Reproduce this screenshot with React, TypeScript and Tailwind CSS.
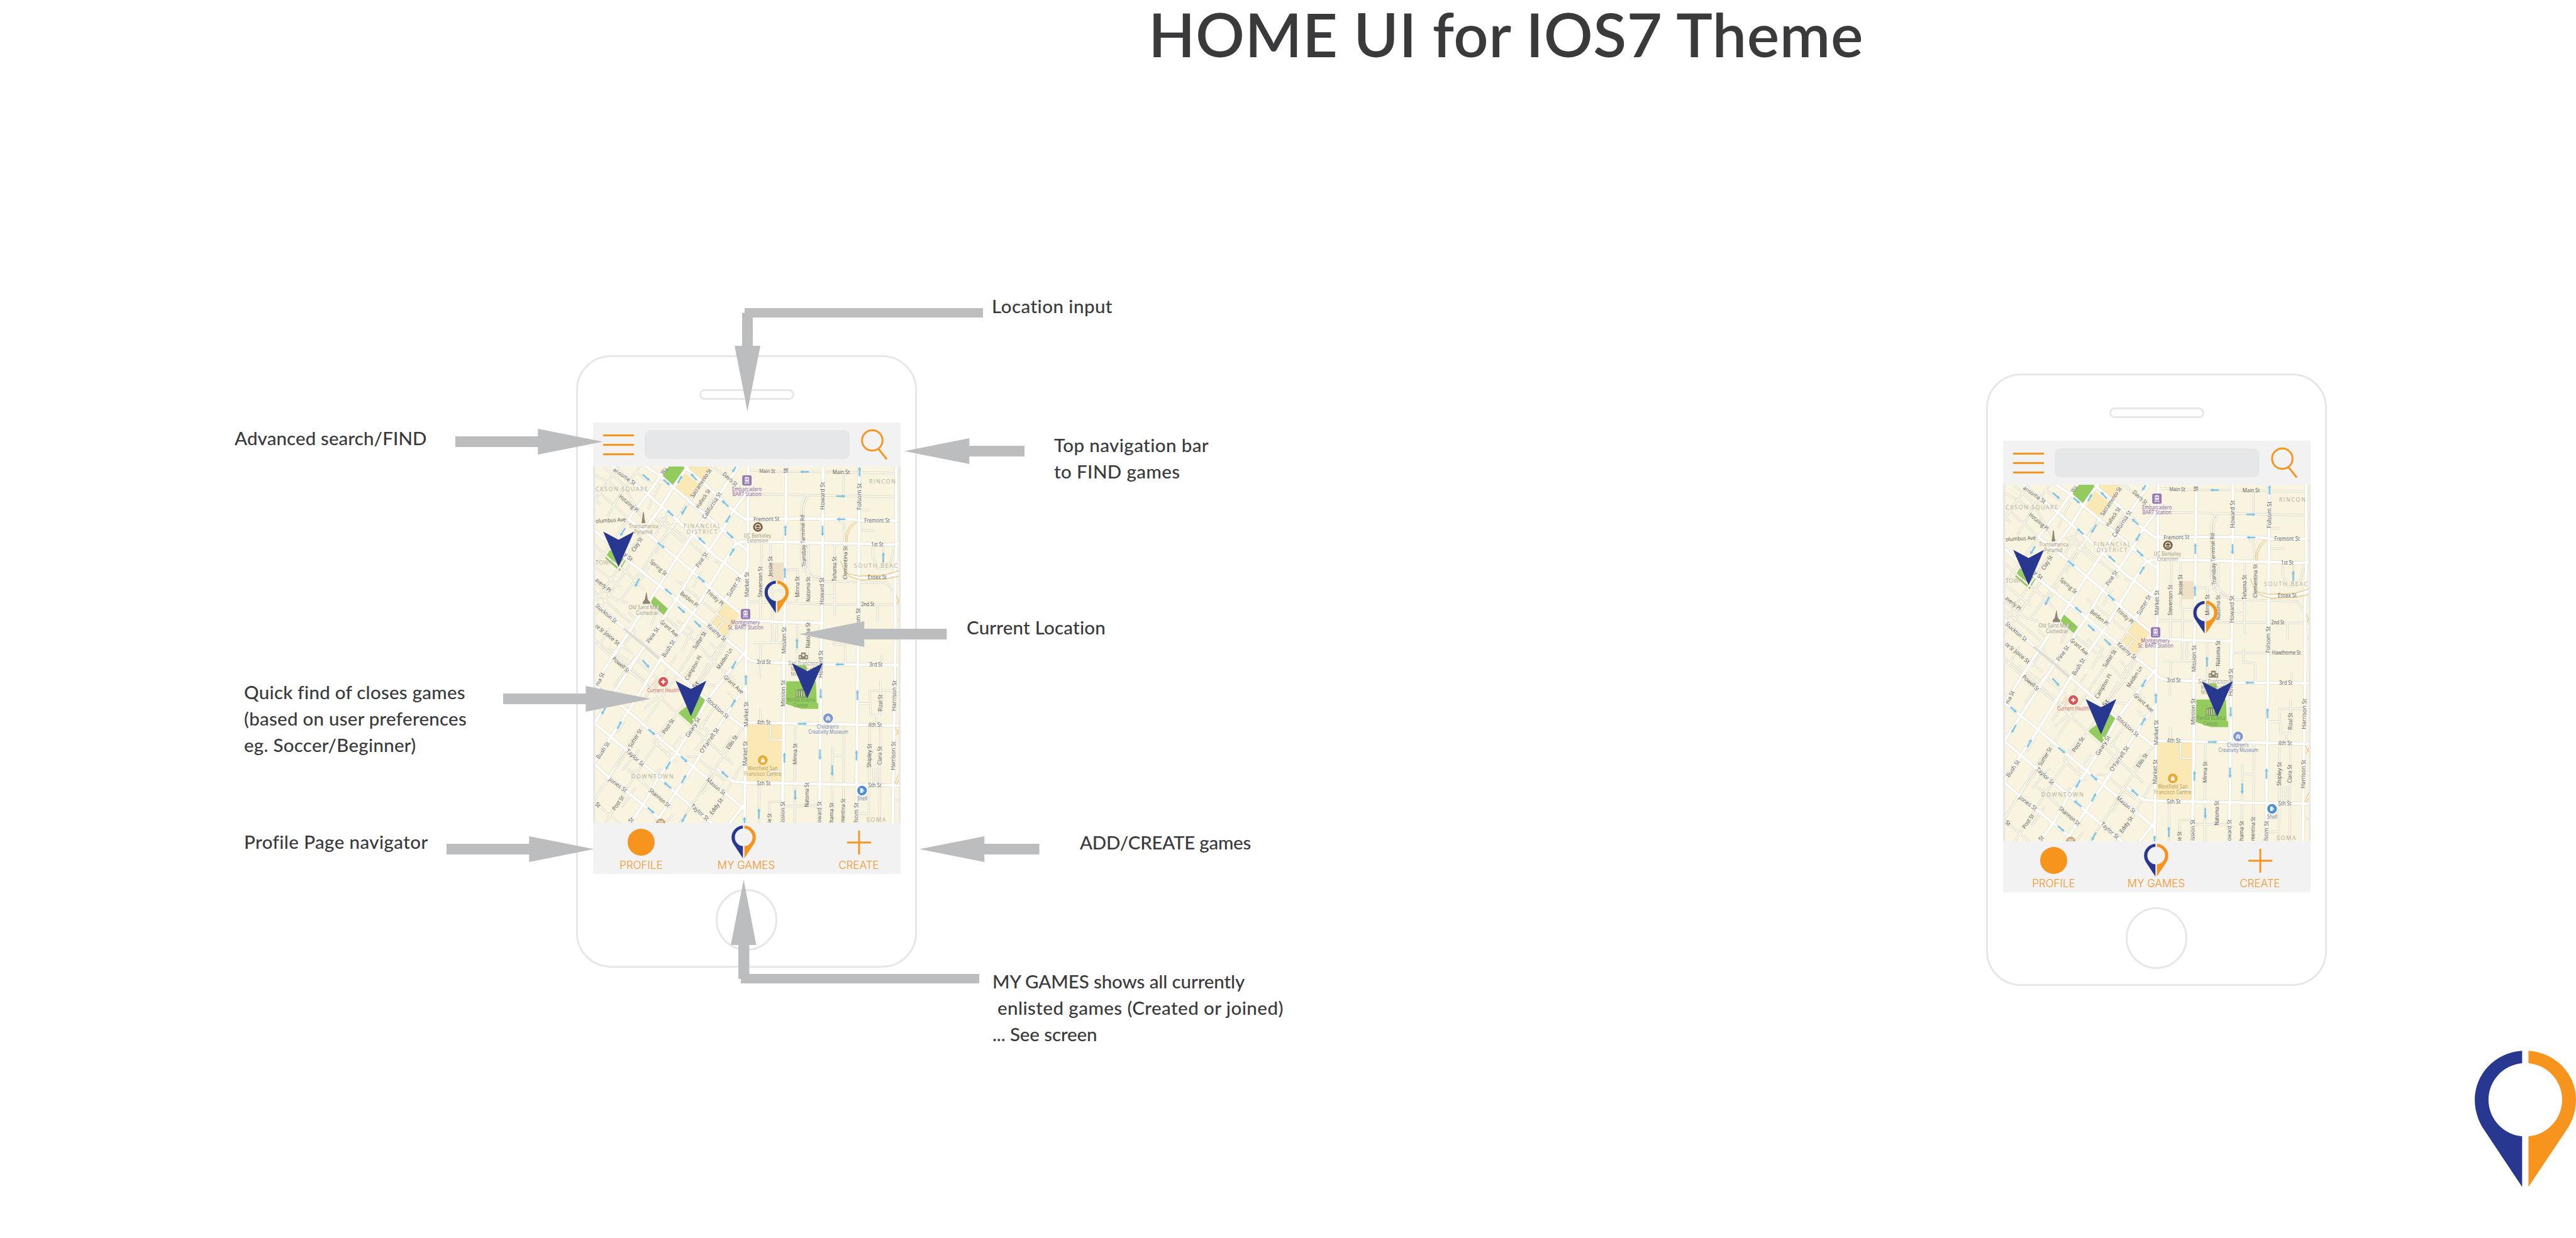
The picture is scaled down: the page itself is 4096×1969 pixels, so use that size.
import React from 'react';

type Pt = [number, number];
type Seg = [number, number, number, number];

const NAVY = '#28378f';
const ORANGE = '#f7941e';
const GREY = '#bbbdbf';

/* Map survey units: 1.96 per px across, 3 per px down. */
const X = (u: number) => u / 1.96;
const Y = (v: number) => v / 3;
const line = (pts: number[]) => {
  let d = '';
  for (let i = 0; i < pts.length; i += 2) {
    d += (i === 0 ? 'M' : 'L') + X(pts[i]).toFixed(1) + ' ' + Y(pts[i + 1]).toFixed(1);
  }
  return d;
};

const MAJOR: number[][] = [
  [790, 800, 787, 1480, 781, 2080, 779, 2600, 774, 3190],
  [955, 800, 951, 1440, 947, 1840, 944, 2110, 943, 2640, 940, 2900, 937, 3190],
  [1114, 800, 1110, 1700, 1105, 2130, 1101, 2900, 1096, 3190],
  [1271, 800, 1268, 1700, 1263, 2300, 1258, 3190],
  [1431, 800, 1432, 1300, 1426, 1600, 1427, 2000, 1422, 2500, 1416, 3190],
  [720, 1100, 775, 1165, 950, 1163, 1230, 1165, 1280, 1175, 1450, 1177],
  [735, 1335, 760, 1313, 950, 1318, 1270, 1328, 1390, 1335, 1450, 1330],
  [787, 1838, 950, 1848, 1110, 1853],
  [770, 2060, 800, 2100, 830, 2112, 945, 2118, 1100, 2128, 1450, 2132],
  [760, 2540, 785, 2514, 1000, 2520, 1450, 2535],
  [655, 2820, 725, 2905, 780, 2912, 1100, 2922, 1450, 2932],
  [1225, 1530, 1270, 1556, 1380, 1550, 1450, 1520],
  [510, 800, 530, 840, 600, 930, 725, 1110, 780, 1170],
  [330, 800, 410, 880, 465, 955, 680, 1235, 740, 1320, 787, 1372],
  [190, 800, 355, 1000, 480, 1170, 550, 1270, 640, 1400, 700, 1470, 785, 1575],
  [270, 1165, 345, 1250, 480, 1425, 550, 1515, 620, 1615, 690, 1705, 790, 1835],
  [120, 1235, 270, 1440, 405, 1605, 550, 1790, 700, 1970, 775, 2065],
  [120, 1710, 240, 1870, 410, 2095, 610, 2360, 770, 2545],
  [120, 2255, 270, 2440, 480, 2715, 550, 2805, 690, 2980, 772, 3088],
  [120, 2510, 195, 2610, 400, 2870, 475, 2980, 640, 3190],
  [120, 2785, 190, 2880, 335, 3060, 435, 3190],
  [445, 800, 410, 880, 355, 1000, 270, 1165],
  [535, 800, 465, 955, 410, 1090, 340, 1240],
  [755, 800, 680, 970, 620, 1100, 550, 1270, 480, 1425, 405, 1605, 200, 2085, 120, 2270],
  [787, 985, 725, 1110, 680, 1235, 620, 1370, 550, 1515, 480, 1695, 375, 1930, 270, 2170, 120, 2525],
  [740, 1320, 690, 1440, 620, 1615, 550, 1790, 410, 2095, 270, 2440, 195, 2610, 120, 2785],
  [785, 1490, 690, 1705],
  [777, 2040, 690, 2210, 610, 2370, 550, 2540, 480, 2715, 400, 2880, 335, 3060, 275, 3190],
  [775, 2280, 700, 2450, 640, 2590, 550, 2810, 475, 2980, 405, 3140, 385, 3190],
  [772, 3060, 705, 3190],
];

const MINOR: number[][] = [
  [790, 840, 920, 852, 1110, 852, 1450, 862],
  [785, 998, 950, 1003, 1450, 1019],
  [785, 1713, 950, 1722, 1110, 1730, 1450, 1733],
  [810, 1985, 945, 1985],
  [1110, 1578, 1270, 1583, 1390, 1590, 1422, 1655],
  [1110, 1931, 1430, 1935],
  [848, 1322, 843, 1720, 843, 1845],
  [845, 1990, 840, 2220],
  [887, 1322, 887, 1625, 896, 1640, 893, 1985],
  [896, 1642, 945, 1642],
  [915, 1850, 912, 1985],
  [950, 1500, 1003, 1500, 1002, 1720],
  [1002, 1860, 1002, 2122],
  [1050, 1322, 1048, 1720],
  [1048, 1853, 1046, 2122],
  [1038, 1010, 1020, 1080, 1019, 1420, 1032, 1510, 1075, 1560, 1110, 1574],
  [1048, 1010, 1030, 1080, 1028, 1420, 1042, 1500, 1080, 1545, 1110, 1556],
  [1110, 1670, 1163, 1670],
  [1165, 1330, 1163, 1580, 1165, 1810],
  [1203, 855, 1203, 1000],
  [1180, 1185, 1203, 1190, 1208, 1330, 1210, 1590],
  [1271, 1103, 1315, 1106],
  [1271, 1238, 1337, 1242],
  [1330, 1350, 1330, 1420, 1350, 1490, 1380, 1492, 1405, 1460, 1422, 1350],
  [1375, 1350, 1375, 1470],
  [1350, 1735, 1350, 1840],
  [1427, 1830, 1450, 1830],
  [1160, 1900, 1160, 1995, 1210, 2000, 1210, 2125],
  [1368, 2060, 1367, 2130],
  [1363, 2240, 1360, 2465, 1320, 2465, 1316, 2303, 1425, 2300],
  [1265, 2388, 1316, 2388],
  [1345, 2465, 1345, 2530],
  [994, 2525, 992, 2920, 992, 3190],
  [1155, 2670, 1153, 2920, 1150, 3190],
  [1155, 2735, 1202, 2735],
  [1205, 2535, 1203, 2925, 1200, 3190],
  [1316, 2535, 1312, 3190],
  [1362, 2535, 1360, 3190],
  [1332, 2815, 1332, 2925],
  [1348, 2815, 1348, 2925],
  [1332, 2868, 1348, 2868],
  [843, 2420, 843, 2512],
  [887, 2530, 887, 2628, 938, 2630],
  [940, 2835, 885, 2840, 885, 2915],
  [838, 2915, 836, 3190],
  [881, 3190, 883, 3040, 940, 3040],
  [940, 3067, 1098, 3067],
  [1045, 2925, 1045, 3067],
  [1258, 3118, 1312, 3118],
  [1420, 3032, 1450, 3032],
  [120, 1975, 200, 2080, 340, 2250, 480, 2450, 560, 2560, 725, 2790],
  [120, 1960, 210, 2070, 350, 2240, 410, 2340],
  [120, 3035, 195, 3135, 240, 3190],
  [645, 800, 550, 1000, 480, 1170, 410, 1310, 345, 1470, 240, 1700],
  [270, 1165, 240, 1230, 170, 1380, 120, 1480],
  [340, 1240, 250, 1440, 120, 1735],
  [300, 1900, 240, 2020],
  [690, 1705, 620, 1880, 550, 2040, 480, 2200, 340, 2520, 270, 2660, 120, 3040],
  [700, 1970, 640, 2120, 480, 2460, 340, 2770, 190, 3130, 165, 3190],
  [765, 2080, 655, 2270, 600, 2260],
  [770, 2540, 690, 2720, 640, 2830, 560, 3030, 490, 3190],
  [775, 2760, 690, 2990, 605, 3190],
  [640, 817, 720, 920, 745, 980],
  [120, 870, 185, 920, 240, 980],
  [165, 817, 250, 940, 310, 1110, 345, 1190],
  [230, 817, 180, 920, 120, 1050],
  [320, 817, 240, 990, 180, 1150],
  [120, 960, 215, 1080, 270, 1160],
  [120, 1030, 152, 1068],
  [590, 930, 520, 1090, 440, 1270, 390, 1400],
  [300, 850, 375, 930],
  [410, 930, 355, 1100],
  [410, 1150, 540, 1325, 620, 1430],
  [440, 1130, 380, 1290],
  [380, 1150, 510, 1320],
  [650, 1000, 600, 1110],
  [645, 1435, 680, 1480],
  [120, 1330, 190, 1430, 290, 1555, 340, 1640],
  [120, 1470, 240, 1620],
  [120, 1580, 215, 1700, 270, 1720],
  [120, 1640, 280, 1850],
  [270, 1780, 310, 1840],
  [290, 1440, 200, 1640, 130, 1800],
  [360, 1480, 300, 1610],
  [480, 1570, 700, 1850],
  [550, 1620, 590, 1510],
  [400, 1740, 370, 1870],
  [370, 1740, 480, 1880, 550, 1960, 640, 2110, 735, 2240],
  [480, 1840, 550, 1900, 500, 2040],
  [600, 1890, 560, 1980],
  [625, 1985, 660, 2040],
  [720, 1890, 630, 2090],
  [680, 1850, 640, 1930],
  [190, 1890, 140, 2010],
  [130, 1860, 290, 2060],
  [185, 2015, 275, 2110],
  [300, 2080, 210, 2270],
  [300, 2090, 440, 2280],
  [385, 2260, 330, 2380],
  [480, 2070, 420, 2200],
  [550, 2130, 500, 2240],
  [620, 2120, 560, 2270],
  [650, 2400, 580, 2560],
  [700, 2310, 735, 2360],
  [550, 2490, 620, 2580],
  [500, 2600, 435, 2740],
  [450, 2500, 380, 2640],
  [340, 2420, 410, 2330],
  [255, 2500, 220, 2590],
  [380, 2640, 480, 2780],
  [525, 2740, 560, 2740, 690, 2900],
  [620, 2580, 560, 2700],
  [270, 2700, 200, 2850, 130, 3010],
  [320, 2690, 245, 2830],
  [290, 2830, 340, 2910],
  [410, 2820, 370, 2900],
  [300, 2950, 240, 3080],
  [265, 2820, 460, 3080],
  [640, 2860, 590, 2990],
  [465, 3120, 430, 3190],
  [720, 2600, 680, 2700],
];

const GREEN: number[][] = [
  [435, 800, 527, 800, 467, 950, 413, 880],
  [190, 1370, 265, 1425, 233, 1510, 170, 1425],
  [380, 1675, 443, 1760, 425, 1805, 368, 1720],
  [585, 2335, 612, 2375, 550, 2535, 486, 2450],
  [955, 2240, 1083, 2240, 1087, 2385, 1093, 2385, 1093, 2423, 1020, 2423, 953, 2390],
  [985, 2133, 1043, 2133, 1043, 2180, 1000, 2190],
];
const YELLOW: number[][] = [
  [535, 800, 632, 800, 588, 905, 575, 905, 530, 840],
  [515, 860, 575, 930, 540, 1030, 478, 960],
  [690, 1715, 755, 1790, 690, 1945, 632, 1850],
  [785, 2528, 935, 2528, 933, 2910, 783, 2905],
];

const ONE_WAY: Seg[] = [
  [333, 870, 365, 912], [567, 907, 540, 863], [423, 903, 452, 942], [485, 927, 504, 875],
  [736, 820, 720, 858], [1053, 852, 1014, 852], [1272, 882, 1272, 818], [1172, 1014, 1212, 1014],
  [705, 1083, 675, 1040], [522, 1080, 500, 1138], [465, 1145, 437, 1105], [712, 1140, 692, 1193],
  [1211, 1166, 1172, 1166], [951, 1275, 951, 1203], [1112, 1210, 1112, 1280], [257, 1225, 235, 1280],
  [603, 1328, 573, 1285], [697, 1252, 727, 1295], [398, 1320, 429, 1360], [710, 1408, 731, 1355],
  [1375, 1455, 1375, 1385], [949, 1555, 949, 1485], [318, 1560, 299, 1617], [572, 1545, 603, 1588],
  [458, 1665, 428, 1625], [486, 1745, 517, 1790], [557, 1840, 587, 1885], [1001, 2022, 1001, 1955],
  [332, 2100, 363, 2152], [737, 2108, 717, 2162], [1205, 2129, 1166, 2129], [780, 2265, 780, 2195],
  [150, 2290, 178, 2328], [1104, 2290, 1104, 2358], [1263, 2365, 1263, 2295], [174, 2408, 154, 2463],
  [716, 2412, 736, 2358], [1005, 2522, 1046, 2522], [223, 2555, 242, 2502], [358, 2558, 388, 2598],
  [498, 2737, 528, 2778], [947, 2780, 947, 2712], [1101, 2692, 1101, 2762], [1259, 2765, 1259, 2695],
  [1154, 2797, 1154, 2868], [452, 2773, 432, 2828], [703, 2878, 672, 2835], [502, 2917, 521, 2860],
  [457, 2952, 424, 2908], [994, 2960, 994, 3030], [836, 3152, 836, 3082], [774, 3185, 774, 3138],
  [355, 3078, 384, 3118], [521, 3122, 501, 3178],
];

type Label = [string, number, number, number, number];

const STREETS: Label[] = [
  ['ansome St', 208, 832, 300, 932], ['Wa', 416, 862, 436, 828], ['Sacramento St', 545, 1018, 625, 835],
  ['Davis St', 683, 860, 740, 940], ['Halleck St', 568, 1090, 620, 970], ['California St', 596, 1160, 668, 990],
  ['Hotaling Pl', 233, 1010, 312, 1112], ['Main St', 838, 845, 907, 847], ['Main St', 1155, 855, 1230, 855],
  ['Mi', 955, 860, 955, 826], ['Howard St', 1113, 1103, 1113, 920], ['Folsom St', 1270, 1105, 1271, 927],
  ['Fremont St', 813, 1166, 925, 1163], ['Fremont St', 1293, 1173, 1403, 1173], ['olumbus Ave', 129, 1178, 260, 1168],
  ['Transbay Terminal Rd', 1032, 1480, 1024, 1138], ['1st St', 1322, 1331, 1376, 1331], ['Clay St', 290, 1378, 326, 1290],
  ['y St', 255, 1395, 287, 1437], ['Pine St', 568, 1482, 608, 1388], ['Spring St', 368, 1440, 435, 1533],
  ['Jessie St', 886, 1545, 886, 1412], ['Stevenson St', 842, 1683, 842, 1480], ['Tehama St', 1164, 1578, 1164, 1415],
  ['Clementina St', 1210, 1565, 1211, 1343], ['Essex St', 1308, 1551, 1390, 1551], ['Sutter St', 703, 1675, 752, 1550],
  ['Market St', 783, 1683, 784, 1515], ['Minna St', 1003, 1683, 1003, 1545], ['Natoma St', 1050, 1713, 1049, 1548],
  ['Howard St', 1109, 1732, 1109, 1552], ['averly Pl', 131, 1562, 192, 1642], ['Belden Pl', 498, 1652, 572, 1742],
  ['Trinity Pl', 612, 1640, 680, 1732], ['Stockton St', 131, 1733, 218, 1848], ['2nd St', 1280, 1728, 1336, 1728],
  ['ce St', 131, 1869, 162, 1910], ['Joice St', 170, 1915, 230, 1995], ['Grant Ave', 412, 1842, 485, 1940],
  ['Kearny St', 615, 1867, 692, 1967], ['Folsom St', 1265, 1932, 1266, 1755], ['Hawthorne St', 1283, 1931, 1407, 1931],
  ['Pine St', 355, 1982, 398, 1885], ['Bush St', 422, 2077, 467, 1970], ['Sutter St', 555, 2022, 602, 1915],
  ['Maiden Ln', 658, 2157, 716, 2023], ['Campton Pl', 522, 2230, 582, 2073], ['Mission St', 944, 2058, 945, 1880],
  ['Natoma St', 1048, 2020, 1048, 1850], ['Howard St', 1103, 2218, 1104, 2035], ['3rd St', 827, 2111, 888, 2111],
  ['3rd St', 1314, 2131, 1372, 2131], ['Powell St', 205, 2085, 272, 2177], ['nia St', 134, 2268, 160, 2185],
  ['Grant Ave', 687, 2205, 766, 2317], ['Stockton St', 612, 2355, 703, 2480], ['St', 552, 2282, 572, 2243],
  ['Mission St', 940, 2408, 941, 2232], ['Harrison St', 1420, 2437, 1423, 2235], ['Rizal St', 1362, 2440, 1362, 2328],
  ['Market St', 780, 2543, 781, 2375], ['4th St', 828, 2514, 887, 2514], ['4th St', 1310, 2531, 1369, 2531],
  ['Post St', 422, 2585, 464, 2492], ['Geary St', 524, 2607, 576, 2482], ["O'Farrell St", 585, 2712, 657, 2553],
  ['Ellis St', 700, 2687, 739, 2600], ['Sutter St', 276, 2677, 324, 2560], ['Bush St', 137, 2750, 184, 2645],
  ['Taylor St', 265, 2695, 336, 2797], ['Market St', 775, 2802, 777, 2637], ['Minna St', 992, 2792, 993, 2652],
  ['Shipley St', 1313, 2812, 1315, 2655], ['Clara St', 1361, 2793, 1361, 2672], ['Harrison St', 1416, 2830, 1419, 2640],
  ['5th St', 828, 2917, 887, 2917], ['5th St', 1310, 2929, 1367, 2929], ['Jones St', 190, 2885, 262, 2968],
  ['Mason St', 613, 2887, 688, 2987], ['Shannon St', 363, 2957, 447, 3068], ['Post St', 206, 3092, 247, 3003],
  ['Taylor St', 545, 3060, 616, 3157], ['Eddy St', 628, 3120, 675, 3018], ['Natoma St', 1043, 3075, 1043, 2912],
  ['ie St', 881, 3177, 882, 3115], ['ission St', 938, 3176, 939, 3035], ['oward St', 1097, 3177, 1098, 3037],
  ['hama St', 1150, 3177, 1151, 3045], ['mentina St', 1199, 3177, 1201, 3018], ['lsom St', 1256, 3177, 1258, 3045],
  ['St', 131, 3048, 147, 3072], ['St', 275, 3172, 290, 3148],
];

const DISTRICTS: Label[] = [
  ['CKSON SQUARE', 129, 966, 355, 966], ['FINANCIAL', 510, 1212, 670, 1212], ['DISTRICT', 523, 1250, 656, 1250],
  ['RINCON', 1313, 915, 1428, 915], ['SOUTH BEAC', 1248, 1476, 1437, 1476], ['TOWN', 129, 1454, 205, 1454],
  ['DOWNTOWN', 283, 2870, 466, 2870], ['SOMA', 1302, 3157, 1386, 3157],
];

const PLACES: { color: string; labels: Label[] }[] = [
  {
    color: '#8560a8',
    labels: [
      ['Embarcadero', 720, 967, 849, 967], ['BART Station', 721, 1001, 847, 1001],
      ['Montgomery', 715, 1850, 840, 1850], ['St. BART Station', 702, 1884, 856, 1884],
    ],
  },
  {
    color: '#a39984',
    labels: [
      ['Transamerica', 273, 1213, 400, 1213], ['Pyramid', 296, 1249, 375, 1249],
      ['UC Berkeley', 771, 1273, 889, 1273], ['Extension', 785, 1309, 877, 1309],
      ["Old Saint Mary's", 272, 1750, 428, 1750], ['Cathedral', 303, 1786, 398, 1786],
      ['San Francisco', 964, 2121, 1095, 2121], ['Museum of', 975, 2157, 1075, 2157], ['Modern Art', 975, 2193, 1080, 2193],
    ],
  },
  { color: '#6f9a55', labels: [['Yerba Buena', 957, 2364, 1080, 2364], ['Center', 985, 2400, 1050, 2400]] },
  { color: '#cf6a64', labels: [['Current Health', 352, 2298, 492, 2298]] },
  {
    color: '#6d83b8',
    labels: [["Children's", 1088, 2541, 1182, 2541], ['Creativity Museum', 1051, 2576, 1223, 2576], ['Shell', 1261, 3018, 1306, 3018]],
  },
  { color: '#b79a5c', labels: [['Westfield San', 788, 2817, 918, 2817], ['Francisco Centre', 772, 2853, 933, 2853]] },
];

function MapLabel({ item, spaced }: { item: Label; spaced?: boolean }) {
  const [text, u1, v1, u2, v2] = item;
  const dx = X(u2) - X(u1);
  const dy = Y(v2) - Y(v1);
  const angle = (Math.atan2(dy, dx) * 180) / Math.PI;
  return (
    <text
      dy="0.35em"
      fontSize="12.5"
      textLength={Math.hypot(dx, dy).toFixed(1)}
      lengthAdjust={spaced ? 'spacing' : 'spacingAndGlyphs'}
      transform={`translate(${X(u1).toFixed(1)} ${Y(v1).toFixed(1)}) rotate(${angle.toFixed(1)})`}
    >
      {text}
    </text>
  );
}

function OneWay({ seg }: { seg: Seg }) {
  const [u1, v1, u2, v2] = seg;
  const dx = X(u2) - X(u1);
  const dy = Y(v2) - Y(v1);
  const len = Math.hypot(dx, dy);
  const angle = (Math.atan2(dy, dx) * 180) / Math.PI;
  return (
    <path
      d={`M0 -1.8H${len - 7}V-3.8L${len} 0L${len - 7} 3.8V1.8H0Z`}
      transform={`translate(${X(u1)} ${Y(v1)}) rotate(${angle})`}
    />
  );
}

function Badge({ at, fill, edge, children }: { at: Pt; fill: string; edge: string; children?: React.ReactNode }) {
  return (
    <g transform={`translate(${X(at[0])} ${Y(at[1])})`}>
      <circle r="9.8" fill={fill} stroke={edge} strokeWidth="1.2" />
      {children}
    </g>
  );
}

function Train({ at }: { at: Pt }) {
  return (
    <g transform={`translate(${X(at[0])} ${Y(at[1])})`}>
      <rect x="-9.6" y="-10.6" width="19.2" height="21.2" rx="2.4" fill="#9a7cba" stroke="#7a589e" />
      <path d="M-4.5 -5.5Q-4.5 -7.5 -2 -7.5H2Q4.5 -7.5 4.5 -5.5V3H-4.5Z" fill="#fff" />
      <path d="M-3 -4.5H-.6V-1.5H-3ZM.6 -4.5H3V-1.5H.6ZM-3 .3H-1.5V1.6H-3ZM1.5 .3H3V1.6H1.5Z" fill="#8a68ad" />
      <path d="M-3 4L-5 8M3 4L5 8M-3.6 6H3.6" stroke="#fff" strokeWidth="1.3" />
    </g>
  );
}

const LEFT_HALF = 'M315 0A337 326 0 0 0 0 326C0 390 18 455 52 510L315 906V569A246 244 0 0 1 315 83Z';
const RIGHT_HALF = 'M357 0A337 326 0 0 1 673 326C673 390 655 455 621 510L357 906V569A246 244 0 0 0 357 83Z';

function Pin({ className, x, y, width, height }: { className?: string; x?: number; y?: number; width?: number; height?: number }) {
  return (
    <svg className={className} x={x} y={y} width={width} height={height} viewBox="0 0 673 906">
      <path d={LEFT_HALF} fill={NAVY} />
      <path d={RIGHT_HALF} fill={ORANGE} />
    </svg>
  );
}

function CityMap({ pinX, pinY }: { pinX: number; pinY: number }) {
  const games: Pt[] = [[228.5, 1248], [542, 2237], [1046, 2120]];
  return (
    <svg className="block h-[567px] w-full shrink-0" viewBox="60.2 272.3 679.6 787.7" preserveAspectRatio="none">
      <rect x="60" y="272" width="680" height="788" fill="#e6e7e8" />
      <svg x="64.8" y="272.3" width="671.4" height="787.7" viewBox="64.8 272.3 671.4 787.7">
        <rect x="60" y="272" width="680" height="788" fill="#f8f4df" />
        <path d={line([893, 1455, 945, 1455, 945, 1575, 890, 1575])} fill="#f0e0c6" />
        <path d={line([390, 2220, 410, 2250, 385, 2310, 352, 2290])} fill="#f3e4cc" />
        {YELLOW.map((p, i) => <path key={i} d={line(p) + 'Z'} fill="#fae9b4" />)}
        {GREEN.map((p, i) => <path key={i} d={line(p) + 'Z'} fill="#94cb5f" />)}
        <g fill="none" strokeLinejoin="round">
          <g stroke="#d5d1bd" strokeWidth="4.6">{MINOR.map((p, i) => <path key={i} d={line(p)} />)}</g>
          <g stroke="#dcd8c5" strokeWidth="7.6">{MAJOR.map((p, i) => <path key={i} d={line(p)} />)}</g>
          <g stroke="#fdfcf5" strokeWidth="2.6">{MINOR.map((p, i) => <path key={i} d={line(p)} />)}</g>
          <g stroke="#fff" strokeWidth="6">{MAJOR.map((p, i) => <path key={i} d={line(p)} />)}</g>
          <path d={line([250, 1890, 330, 1990, 405, 2090])} stroke="#dedbd2" strokeWidth="5" />
          <g stroke="#e9b96a" strokeWidth="1.3">
            <path d={line([1252, 1180, 1228, 1215, 1214, 1265, 1211, 1320])} />
            <path d={line([1262, 1182, 1236, 1220, 1221, 1270, 1218, 1320])} />
            <path d={line([1190, 1440, 1205, 1500, 1235, 1550, 1280, 1570, 1390, 1562, 1443, 1545])} />
            <path d={line([1225, 1530, 1265, 1543, 1380, 1536, 1443, 1508])} />
            <path d={line([1432, 1670, 1443, 1720])} />
            <path d={line([1434, 1730, 1443, 1700])} />
            <path d={line([1425, 2545, 1443, 2590])} />
            <path d={line([1430, 2600, 1443, 2560])} />
            <path d={line([1424, 2920, 1443, 2855])} />
            <path d={line([1432, 2925, 1443, 2890])} />
            <path d={line([1435, 1183, 1443, 1183])} />
          </g>
        </g>
        <g fill="#7fc5ea">{ONE_WAY.map((s, i) => <OneWay key={i} seg={s} />)}</g>
        <g fontFamily='"Open Sans", "Noto Sans", sans-serif'>
          <g fill="#b5b09c">{DISTRICTS.map((l, i) => <MapLabel key={i} item={l} spaced />)}</g>
          <g fill="#5a5955">{STREETS.map((l, i) => <MapLabel key={i} item={l} />)}</g>
          {PLACES.map((p, i) => (
            <g key={i} fill={p.color}>{p.labels.map((l, j) => <MapLabel key={j} item={l} />)}</g>
          ))}
        </g>
        <Train at={[784.5, 909]} />
        <Train at={[778.5, 1795]} />
        <Badge at={[832, 1218]} fill="#7a6343" edge="#5c4930">
          <circle r="6.6" fill="#f4efe2" />
          <path d="M-6 -1.5L0 -5L6 -1.5L0 1ZM-4 1.2Q0 4 4 1.2V4Q0 6.5 -4 4Z" fill="#6d5739" />
        </Badge>
        <Badge at={[422, 2244]} fill="#dd5358" edge="#c13d44">
          <path d="M-1.5 -5H1.5V-1.5H5V1.5H1.5V5H-1.5V1.5H-5V-1.5H-1.5Z" fill="#fff" />
        </Badge>
        <Badge at={[1136, 2485]} fill="#7f9bd6" edge="#5f7dbd">
          <path d="M0 -5L5.5 -1H-5.5ZM-4.6 0H4.6V5H1.3V1.8H-1.3V5H-4.6Z" fill="#fff" />
        </Badge>
        <Badge at={[853, 2763]} fill="#edac32" edge="#cf8f1f">
          <path d="M-4 -1.5H4V5H-4ZM-2.2 -1.5V-3.4Q-2.2 -5 0 -5Q2.2 -5 2.2 -3.4V-1.5H1V-3.4Q1 -3.8 0 -3.8Q-1 -3.8 -1 -3.4V-1.5Z" fill="#fff" />
        </Badge>
        <Badge at={[1283, 2965]} fill="#4a90d9" edge="#2f74bf">
          <path d="M-4 -5H1.5V5H-4ZM2 -3L4.5 -1V3.5H3.3V0H2Z" fill="#fff" />
        </Badge>
        <Badge at={[411, 3182]} fill="#c9a87b" edge="#b08d5e">
          <path d="M-4 -4V0M-1.3 -4V0M1.3 -4V0M4 -4V0M-6 -5H6" stroke="#fff" strokeWidth="1" />
        </Badge>
        <g fill="#8f8673">
          <path d={line([334, 1120, 338, 1120, 341, 1165, 344, 1192, 328, 1192, 331, 1165]) + 'Z'} />
          <path d={line([348, 1650, 350, 1650, 354, 1690, 356, 1702, 364, 1712, 365, 1728, 333, 1728, 334, 1712, 341, 1702, 343, 1690]) + 'Z'} />
          <path d={line([1009, 2095, 1009, 2066, 1019, 2066, 1019, 2050, 1039, 2050, 1039, 2066, 1049, 2066, 1049, 2095]) + 'Z'} />
          <path d={line([996, 2348, 996, 2300, 1006, 2296, 1018, 2290, 1040, 2290, 1046, 2300, 1046, 2348]) + 'Z'} fill="#7f9a5c" />
        </g>
        <path d="M516.5 692h3v3.4h-3zM522.5 686.5h5v5h-5zM530 692h3v3.4h-3z" fill="#f5f0dd" />
        <path d="M511 768v13M516 768v13M521 768v13M526 768v13" stroke="#dbe8c3" strokeWidth="1.6" />
        {games.map(([u, v], i) => (
          <path key={i} d="M-34 0L0 18L34 0L0 78Z" transform={`translate(${X(u)} ${Y(v)})`} fill={NAVY} />
        ))}
        <Pin x={pinX} y={pinY} width={54} height={72} />
      </svg>
    </svg>
  );
}

function Tab({ label, children }: { label: string; children: React.ReactNode }) {
  return (
    <div className="flex flex-col items-center gap-[5px]">
      <div className="flex h-[52px] items-center justify-center">{children}</div>
      <span className="whitespace-nowrap font-['Inter'] text-[17px] leading-[20px] font-light text-[#f7941e]">{label}</span>
    </div>
  );
}

type PhoneProps = {
  className?: string;
  pinX: number;
  pinY: number;
  columns: string;
  gamesPin?: string;
};

function Phone({ className = '', pinX, pinY, columns, gamesPin = '' }: PhoneProps) {
  return (
    <section className={`flex h-[974px] w-[542px] shrink-0 flex-col items-center rounded-[55px] border-3 border-[#e6e7e8] pt-[51px] ${className}`}>
      <div className="h-[17px] w-[151px] shrink-0 rounded-full border-3 border-[#e6e7e8]" />
      <div className="mt-[36px] mb-[24px] flex h-[718px] w-[489px] shrink-0 flex-col bg-[#f2f2f3]">
        <header className="flex h-[70px] shrink-0 items-center gap-[17px] pl-[16px]">
          <div className="flex h-[33px] w-[49px] flex-col justify-between">
            <span className="h-[3px] bg-[#f7941e]" />
            <span className="h-[3px] bg-[#f7941e]" />
            <span className="h-[3px] bg-[#f7941e]" />
          </div>
          <div className="h-[46px] w-[326px] rounded-[9px] bg-[#e6e7e8]" />
          <svg className="h-[50px] w-[44px]" viewBox="0 0 44 50" fill="none" stroke={ORANGE} strokeWidth="2.9">
            <circle cx="19" cy="18.5" r="16.3" />
            <path d="M28.5 31.5L42 48.5" />
          </svg>
        </header>
        <CityMap pinX={pinX} pinY={pinY} />
        <footer className={`grid h-[81px] shrink-0 justify-start ${columns}`}>
          <Tab label="PROFILE">
            <span className="mt-[9px] size-[43px] rounded-full bg-[#f7941e]" />
          </Tab>
          <Tab label="MY GAMES">
            <Pin className={`mt-[8px] h-[52px] w-[39px] ${gamesPin}`} />
          </Tab>
          <Tab label="CREATE">
            <svg className="mt-[9px] size-[38px]" viewBox="0 0 38 38" stroke={ORANGE} strokeWidth="2.9">
              <path d="M0 19H38M19 0V38" />
            </svg>
          </Tab>
        </footer>
      </div>
      <div className="size-[98px] shrink-0 rounded-full border-3 border-[#e6e7e8]" />
    </section>
  );
}

function SideArrow({ className, length, flip }: { className: string; length: number; flip?: boolean }) {
  const head = 103.3;
  return (
    <svg
      className={`absolute h-[41px] overflow-visible ${flip ? 'rotate-180' : ''} ${className}`}
      style={{ width: length }}
      viewBox={`0 0 ${length} 41`}
    >
      <path d={`M0 12H${length - head}V0L${length} 20.5L${length - head} 41V29H0Z`} fill={GREY} />
    </svg>
  );
}

function Note({ className, children }: { className: string; children: React.ReactNode }) {
  return (
    <p className={`absolute whitespace-pre font-['Lato'] text-[29.5px] leading-[42px] font-medium text-[#3a3a3c] [font-variant-ligatures:none] ${className}`}>
      {children}
    </p>
  );
}

export default function App() {
  return (
    <main className="relative flex h-[1969px] w-[4096px] flex-col overflow-hidden bg-white">
      <h1 className="h-[565px] pl-[1826px] whitespace-nowrap font-['Lato'] text-[97px] leading-[108px] font-semibold tracking-[0.55px] text-[#3a3a3c]">
        HOME UI for IOS7 Theme
      </h1>

      <div className="flex items-start justify-between pr-[396px] pl-[916px]">
        <Phone pinX={438.8} pinY={524.3} columns="grid-cols-[154px_180px_178px]" gamesPin="mr-[8px]" />
        <Phone className="mt-[29px]" pinX={480.2} pinY={529} columns="grid-cols-[162px_164px_166px]" />
      </div>

      <Pin className="mt-[103px] h-[217px] w-[161px] self-end" />

      <svg className="absolute top-[490px] left-[1168px] h-[165px] w-[396px]" viewBox="0 0 396 165" fill={GREY}>
        <path d="M16 0H395V15H29V60H41L20.5 164L0 60H12V7.5H16Z" />
      </svg>
      <svg className="absolute top-[1399px] left-[1162px] h-[165px] w-[396px]" viewBox="0 0 396 165" fill={GREY}>
        <path d="M20.5 0L40.5 104H29.5V150H395V165H16V158H12V104H0Z" />
      </svg>
      <SideArrow className="top-[682px] left-[724px]" length={234.6} />
      <SideArrow className="top-[1091px] left-[800px]" length={234.6} />
      <SideArrow className="top-[1330px] left-[709.5px]" length={234.6} />
      <SideArrow className="top-[697px] left-[1438px]" length={191} flip />
      <SideArrow className="top-[988px] left-[1271.4px]" length={234.4} flip />
      <SideArrow className="top-[1330px] left-[1461.5px]" length={190.6} flip />

      <Note className="top-[676px] left-[373px] tracking-[0.1px]">Advanced search/FIND</Note>
      <Note className="top-[1080px] left-[388px] tracking-[0.25px]">{'Quick find of closes games\n(based on user preferences\neg. Soccer/Beginner)'}</Note>
      <Note className="top-[1318px] left-[388px] tracking-[0.4px]">Profile Page navigator</Note>
      <Note className="top-[466px] left-[1577px] tracking-[0.45px]">Location input</Note>
      <Note className="top-[687px] left-[1676px] tracking-[0.4px]">{'Top navigation bar\nto FIND games'}</Note>
      <Note className="top-[977px] left-[1537px] tracking-[0.2px]">Current Location</Note>
      <Note className="top-[1319px] left-[1717px] tracking-[-0.25px]">ADD/CREATE games</Note>
      <Note className="top-[1540px] left-[1578px] tracking-[-0.1px]">
        MY GAMES shows all currently{'\n'}
        <span className="tracking-[0.45px]"> enlisted games (Created or joined)</span>
        {'\n... See screen'}
      </Note>
    </main>
  );
}
